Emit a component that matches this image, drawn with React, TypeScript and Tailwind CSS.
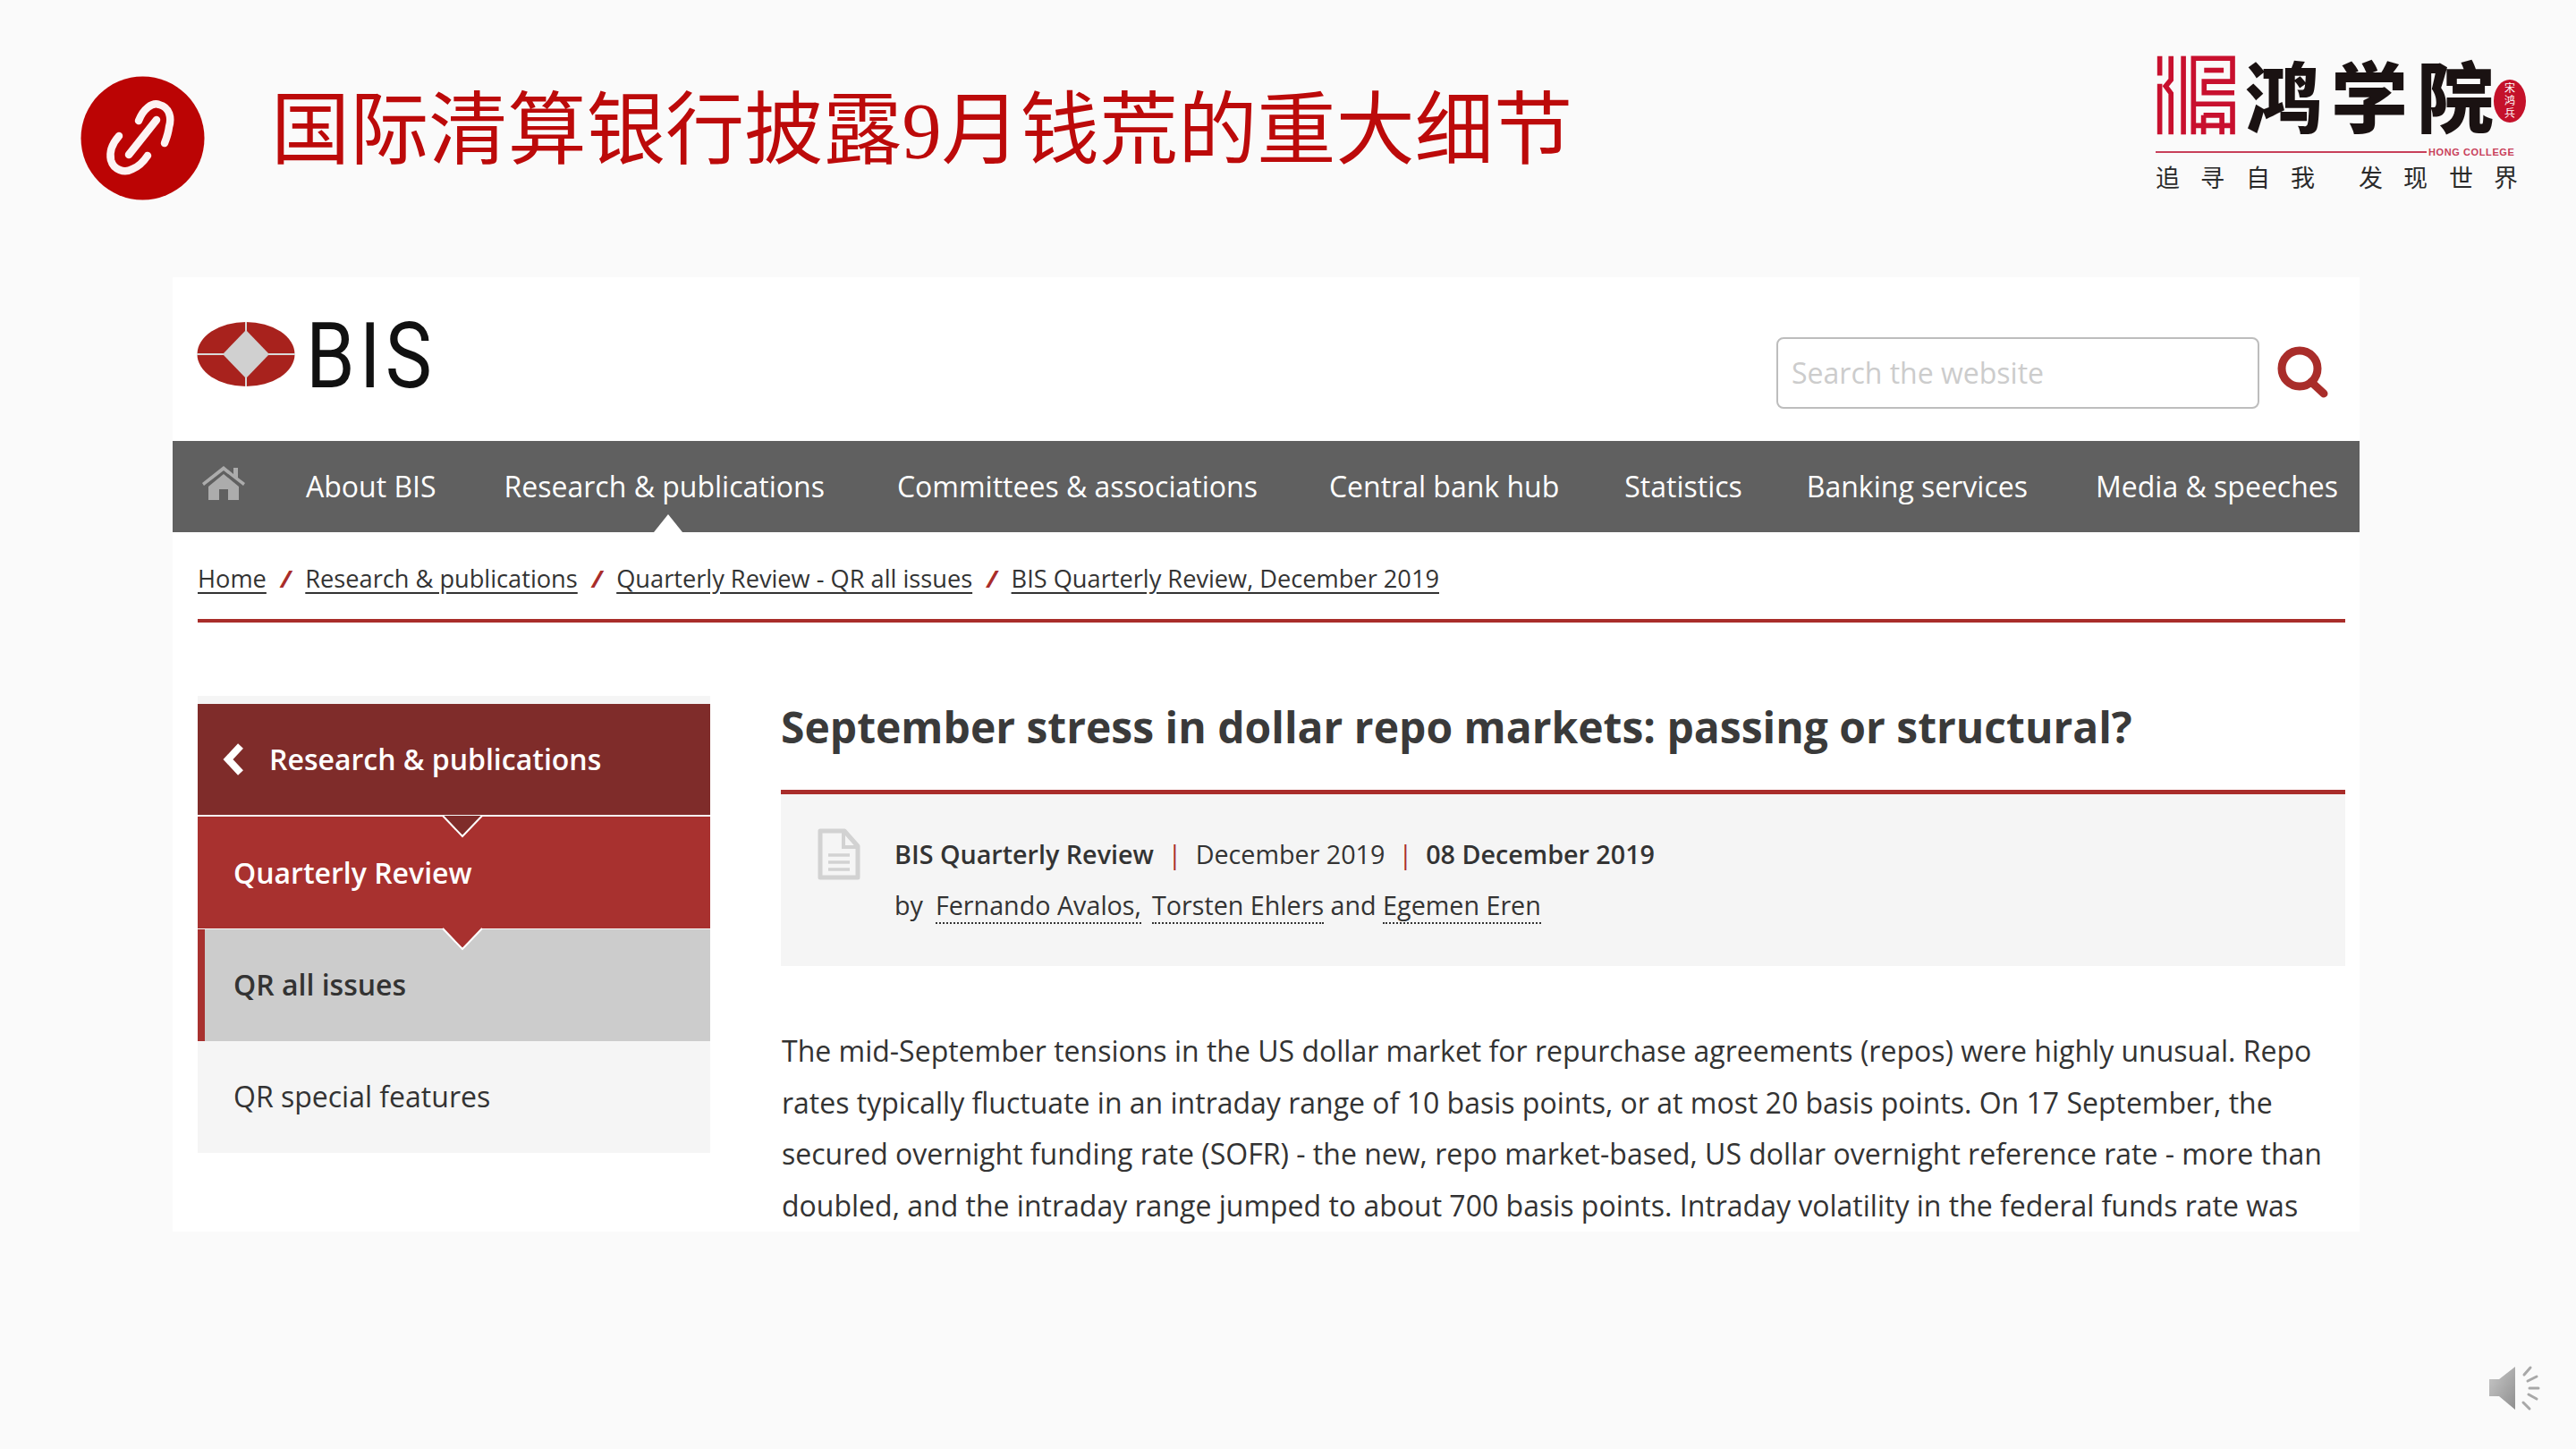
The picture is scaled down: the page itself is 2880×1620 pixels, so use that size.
const navItems = [
  { label: "About BIS", cls: "ml-[67px]" },
  { label: "Research & publications", cls: "ml-[76px]" },
  { label: "Committees & associations", cls: "ml-[81px]" },
  { label: "Central bank hub", cls: "ml-[80px]" },
  { label: "Statistics", cls: "ml-[73px]" },
  { label: "Banking services", cls: "ml-[72px]" },
  { label: "Media & speeches", cls: "ml-[76px]" },
]

const crumbs = ["Home", "Research & publications", "Quarterly Review - QR all issues", "BIS Quarterly Review, December 2019"]

const bodyLines = [
  "The mid-September tensions in the US dollar market for repurchase agreements (repos) were highly unusual. Repo",
  "rates typically fluctuate in an intraday range of 10 basis points, or at most 20 basis points. On 17 September, the",
  "secured overnight funding rate (SOFR) - the new, repo market-based, US dollar overnight reference rate - more than",
  "doubled, and the intraday range jumped to about 700 basis points. Intraday volatility in the federal funds rate was",
]

const LinkBadge = () => (
  <svg width="139" height="139" viewBox="90 85 139 139" className="shrink-0">
    <ellipse cx="159.5" cy="154.5" rx="69" ry="69" fill="#bb0404" />
    <g fill="none" stroke="#fdf3f3" strokeWidth="8.5" strokeLinecap="round" strokeLinejoin="round">
      <path d="M175 134 L144 173" />
      <path d="M155 135 C160 122 170 114 178 117 C190 120 192 132 189 142 C188 150 186 155 184 160" />
      <path d="M133 152 C126 160 122 170 124 179 C127 190 139 194 148 189 C156 186 161 180 165 174" />
    </g>
  </svg>
)

const HongMark = () => (
  <svg width="90" height="90" viewBox="155 108 270 272" className="shrink-0">
    <g fill="none" stroke="#c8102e" strokeWidth="17">
      <path d="M168 110 V176 M168 204 V375" />
      <path d="M206 110 V190 L188 212 L206 236 V375" />
      <path d="M248 110 V375" />
      <path d="M282 375 V118 H414 V196 H318 V234 H420" />
      <path d="M318 158 H384" />
      <path d="M282 272 H414 V375" />
      <path d="M316 310 H378 V375 M316 310 V375" />
      <path d="M282 345 H414" />
    </g>
  </svg>
)

const HongLogo = () => (
  <div className="flex flex-col w-[416px] mt-[62px] mr-[54px] shrink-0">
    <div className="flex items-start h-[94px]">
      <HongMark />
      <div className="flex ml-[10px] font-['Noto_Sans_CJK_SC',sans-serif] font-black text-[86px] leading-[86px] tracking-[10px] text-[#1a1212]">
        鸿学院
      </div>
      <div className="ml-[-10px] mt-[27px] w-[36px] h-[48px] rounded-[50%] bg-[#c4112a] text-white text-[12px] leading-[14px] text-center pt-[2px] font-['Noto_Sans_CJK_SC',sans-serif] shrink-0">
        宋<br />鸿<br />兵
      </div>
    </div>
    <div className="flex items-center h-[12px] mt-[8px]">
      <div className="w-[303px] h-[2px] bg-[#c8405a]" />
      <span className="ml-[2px] font-['Liberation_Sans',sans-serif] font-bold text-[11px] leading-[12px] tracking-[0.6px] text-[#c8405a] whitespace-nowrap">HONG COLLEGE</span>
    </div>
    <div className="flex mt-[5px] font-['Noto_Sans_CJK_SC',sans-serif] text-[27px] leading-[34px] text-[#2a2a2a] whitespace-nowrap">
      <span className="w-[50px]">追</span>
      <span className="w-[51px]">寻</span>
      <span className="w-[50px]">自</span>
      <span className="w-[76px]">我</span>
      <span className="w-[50px]">发</span>
      <span className="w-[51px]">现</span>
      <span className="w-[50px]">世</span>
      <span>界</span>
    </div>
  </div>
)

const HomeIcon = () => (
  <svg width="50" height="40" viewBox="0 0 50 40" className="mt-[-9px] shrink-0" fill="#acacac">
    <path d="M1 20 L25 1 L36 10 V3 H41 V14 L49 20 L47 23 L25 6 L3 23 Z" />
    <path d="M8 24 L25 10 L42 24 V39 H30 V27 H20 V39 H8 Z" />
  </svg>
)

const Notch = ({ fill, left = "left-[273px]" }: { fill: string; left?: string }) => (
  <svg width="46" height="26" viewBox="0 0 46 26" className={`absolute top-[-2px] ${left}`}>
    <polygon points="1,1 45,1 23,24" fill={fill} />
    <polyline points="1,1 23,24 45,1" fill="none" stroke="#ffffff" strokeWidth="2" />
  </svg>
)

export default function App() {
  return (
    <div className="w-[2880px] h-[1620px] bg-[#fafafa] flex flex-col overflow-hidden font-['Open_Sans',sans-serif] text-[#333333]">
      {/* Slide header */}
      <header className="h-[310px] shrink-0 flex items-start">
        <div className="ml-[90px] mt-[85px]">
          <LinkBadge />
        </div>
        <h1 className="ml-[74px] mt-[92px] text-[88.2px] leading-[108px] text-[#bc0a0a] whitespace-nowrap font-['Liberation_Serif','Noto_Sans_CJK_SC',serif]">
          国际清算银行披露9月钱荒的重大细节
        </h1>
        <div className="ml-auto">
          <HongLogo />
        </div>
      </header>

      {/* Embedded BIS page */}
      <section className="ml-[193px] w-[2445px] h-[1067px] shrink-0 bg-white overflow-hidden flex flex-col">
        <div className="h-[183px] shrink-0 flex">
          <div className="ml-[27px] mt-[50px] flex items-start">
            <svg width="110" height="72" viewBox="0 0 110 72">
              <ellipse cx="55" cy="36" rx="54.5" ry="36" fill="#a8221d" />
              <path d="M0 36 H110 M55 0 V72" stroke="#d9d9d9" strokeWidth="2" />
              <polygon points="55,9 81,36 55,63 29,36" fill="#d0d0d0" />
            </svg>
            <span className="ml-[12px] mt-[-12px] text-[102px] leading-[100px] tracking-[6px] font-['Roboto',sans-serif] font-normal text-[#111111] origin-left scale-x-[0.86] inline-block">BIS</span>
          </div>
          <div className="ml-auto mr-[34px] mt-[67px] flex items-start">
            <div className="w-[540px] h-[80px] rounded-[8px] border-2 border-[#bdbdbd] bg-white flex items-center pl-[15px] text-[32px] text-[#cccccc]">
              Search the website
            </div>
            <svg width="58" height="58" viewBox="0 0 58 58" className="ml-[20px] mt-[10px]">
              <circle cx="25" cy="25" r="20" fill="none" stroke="#a92d2a" strokeWidth="9" />
              <path d="M38 40 L52 53" stroke="#a92d2a" strokeWidth="9" strokeLinecap="round" />
            </svg>
          </div>
        </div>

        <nav className="relative h-[102px] shrink-0 bg-[#606060] flex items-center text-white text-[32px] whitespace-nowrap pl-[32px]">
          <HomeIcon />
          {navItems.map((item) => (
            <span key={item.label} className={item.cls}>{item.label}</span>
          ))}
          <div className="absolute bottom-0 left-[538px] w-0 h-0 border-l-[16px] border-r-[16px] border-b-[20px] border-l-transparent border-r-transparent border-b-white" />
        </nav>

        <div className="ml-[28px] mr-[16px] h-[101px] shrink-0 border-b-4 border-[#a92d2a] flex items-center text-[27.2px] pt-[7px] whitespace-nowrap">
          {crumbs.map((c, id) => (
            <span key={c} className="flex items-center">
              {id > 0 && <span className="mx-[16px] font-bold italic text-[#a92d2a]">/</span>}
              <span className="underline underline-offset-[5px]">{c}</span>
            </span>
          ))}
        </div>

        <div className="flex pl-[28px] pr-[16px] pt-[82px] min-h-0">
          {/* Sidebar */}
          <aside className="w-[573px] shrink-0 pt-[9px] bg-[#f5f5f5] h-[511px] flex flex-col">
            <div className="h-[124px] shrink-0 bg-[#7f2c2a] text-white font-semibold text-[32px] flex items-center">
              <svg width="24" height="36" viewBox="0 0 24 36" className="ml-[28px]">
                <path d="M20 3 L6 18 L20 33" fill="none" stroke="#ffffff" strokeWidth="8" />
              </svg>
              <span className="ml-[28px]">Research &amp; publications</span>
            </div>
            <div className="relative h-[125px] shrink-0 mt-[2px] bg-[#a8312f] text-white font-semibold text-[32px] flex items-center pl-[40px]">
              <Notch fill="#7f2c2a" />
              Quarterly Review
            </div>
            <div className="relative h-[125px] shrink-0 mt-[1px] bg-[#cccccc] border-l-[8px] border-[#a8312f] text-[#333333] font-semibold text-[32px] flex items-center pl-[32px]">
              <Notch fill="#a8312f" left="left-[265px]" />
              <span className="mt-[-2px]">QR all issues</span>
            </div>
            <div className="h-[124px] shrink-0 text-[32px] flex items-center pl-[40px]">QR special features</div>
          </aside>

          {/* Article */}
          <article className="ml-[79px] flex-1 min-w-0">
            <h2 className="h-[103px] mt-[2px] text-[48px] leading-[66px] font-bold whitespace-nowrap text-[#3a3a3a]">
              September stress in dollar repo markets: passing or structural?
            </h2>
            <div className="h-[197px] bg-[#f5f5f5] border-t-[5px] border-[#a92d2a] flex">
              <svg width="48" height="58" viewBox="0 0 48 58" className="ml-[41px] mt-[38px] shrink-0">
                <path d="M3 3 H30 L45 20 V55 H3 Z" fill="none" stroke="#d2d2d2" strokeWidth="5" strokeLinejoin="round" />
                <path d="M29 3 V21 H45" fill="none" stroke="#d2d2d2" strokeWidth="4" />
                <path d="M12 30 H36 M12 38 H36 M12 46 H36" stroke="#d2d2d2" strokeWidth="3.5" />
              </svg>
              <div className="ml-[38px] mt-[38px] text-[28.7px] leading-[57px] whitespace-nowrap">
                <div className="flex items-center">
                  <span className="font-semibold">BIS Quarterly Review</span>
                  <span className="mx-[15.5px] text-[#a92d2a]">|</span>
                  <span>December 2019</span>
                  <span className="mx-[15px] text-[#a92d2a]">|</span>
                  <span className="font-semibold">08 December 2019</span>
                </div>
                <div>
                  by
                  <span className="ml-[14px] border-b-2 border-dotted border-[#333333]">Fernando Avalos,</span>
                  <span className="ml-[12px] border-b-2 border-dotted border-[#333333]">Torsten Ehlers</span>
                  <span> and </span>
                  <span className="border-b-2 border-dotted border-[#333333]">Egemen Eren</span>
                </div>
              </div>
            </div>
            <div className="mt-[66px] ml-[1px] text-[32px] leading-[57.7px] whitespace-nowrap">
              {bodyLines.map((line) => (
                <p key={line}>{line}</p>
              ))}
            </div>
          </article>
        </div>
      </section>

      {/* Audio icon */}
      <div className="flex justify-end pr-[38px] mt-[149px]">
        <svg width="60" height="52" viewBox="0 0 60 52">
          <defs>
            <linearGradient id="spk" x1="0" y1="0" x2="1" y2="1">
              <stop offset="0" stopColor="#c9c9c9" />
              <stop offset="1" stopColor="#8f8f8f" />
            </linearGradient>
          </defs>
          <path d="M1 16 H12 L30 2 V50 L12 35 H1 Z" fill="url(#spk)" />
          <g stroke="#a8a8a8" strokeWidth="3" strokeLinecap="round">
            <path d="M40 11 L47 3 M44 18 L54 13 M46 26 L56 26 M45 33 L54 38 M39 42 L46 49" />
          </g>
        </svg>
      </div>
    </div>
  )
}
